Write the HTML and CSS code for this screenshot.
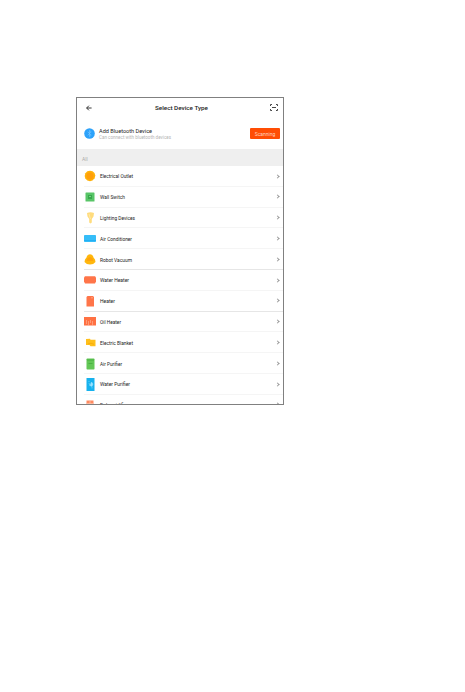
FILE: index.html
```html
<!DOCTYPE html>
<html lang="en">
<head>
<meta charset="utf-8">
<title>Select Device Type</title>
<link rel="stylesheet" href="styles.css">
</head>
<body>
<main class="screen">
  <header class="bar">
    <svg class="back" viewBox="0 0 6 6"><path d="M5.6 3H.7M2.9.7.6 3l2.3 2.3"/></svg>
    <h1 class="title"><svg class="fit" width="53" height="9"><text x="0" y="7" textLength="53" lengthAdjust="spacingAndGlyphs">Select Device Type</text></svg></h1>
    <svg class="scan" viewBox="0 0 8 7"><path d="M.5 2V.5H2M6 .5h1.500V2M.5 5v1.500H2M6 6.500h1.500V5M2 3.500h4"/></svg>
  </header>
  <section class="bluetooth">
    <svg class="bt-icon" viewBox="0 0 11 11"><circle cx="5.500" cy="5.500" r="5.300" fill="#2da2fa"/><path d="M3.700 3.700l3.500 3.500-1.700 1.500V2.300l1.700 1.500-3.500 3.500" fill="none" stroke="#7cc8ff" stroke-width=".6"/></svg>
    <div class="bt-text">
      <svg class="fit" width="56" height="7"><text class="bt-title" x="0" y="6" textLength="53" lengthAdjust="spacingAndGlyphs">Add Bluetooth Device</text></svg>
      <svg class="fit" width="74" height="6"><text class="bt-note" x="0" y="4.500" textLength="72">Can connect with bluetooth devices</text></svg>
    </div>
    <button class="scan-btn">Scanning</button>
  </section>
  <div class="group">All</div>
  <ul class="list">
    <li class="row"><span class="icon"><svg width="12" height="12"><path d="M6 .7l2.500.5 2 1.700.8 2.600-.7 2.700L8.500 10.600 6 11.200l-2.700-.7L1.300 8.500.7 6l.7-2.700 2-2z" fill="#ffb10a"/><circle cx="6" cy="6" r="3.500" fill="#ff9f0b"/></svg></span><svg class="label" width="40" height="9"><text y="6.500" textLength="33" lengthAdjust="spacingAndGlyphs">Electrical Outlet</text></svg><i class="chev"></i></li>
    <li class="row"><span class="icon"><svg width="10" height="10"><rect x=".5" y=".5" width="9" height="9" rx=".6" fill="#58c567"/><rect x="3" y="3" width="4" height="4" fill="#37a94b"/><path d="M4.500 4h1v1h-1z" fill="#c6f0cc"/></svg></span><svg class="label" width="40" height="9"><text y="6.500" textLength="25" lengthAdjust="spacingAndGlyphs">Wall Switch</text></svg><i class="chev"></i></li>
    <li class="row"><span class="icon"><svg width="9" height="12"><path d="M1 1Q4.500-.5 8 1L7.500 4.500 5.800 7v3.500L4.500 11.500 3.200 10.500V7L1.500 4.500z" fill="#ffdc7d"/><path d="M3 2l1.500 5" stroke="#ffe8a8"/></svg></span><svg class="label" width="40" height="9"><text y="6.500" textLength="35" lengthAdjust="spacingAndGlyphs">Lighting Devices</text></svg><i class="chev"></i></li>
    <li class="row"><span class="icon"><svg width="12" height="7"><rect width="12" height="7" rx=".8" fill="#36bdf8"/><path d="M0 5.500h12" stroke="#22b0f4"/></svg></span><svg class="label" width="40" height="9"><text y="6.500" textLength="32" lengthAdjust="spacingAndGlyphs">Air Conditioner</text></svg><i class="chev"></i></li>
    <li class="row strong"><span class="icon"><svg width="12" height="11"><path d="M6 .3Q9 .5 9.500 3.500 11.500 5 11.500 8 9.500 10.500 6 10.500T.5 8q0-3 2-4.500Q3 .5 6 .3z" fill="#ffb70d"/><path d="M3.500 4.500Q6 1.500 8.500 4.500L9.500 7h-7z" fill="#ffa40b"/></svg></span><svg class="label" width="40" height="9"><text y="6.500" textLength="32" lengthAdjust="spacingAndGlyphs">Robot Vacuum</text></svg><i class="chev"></i></li>
    <li class="row"><span class="icon"><svg width="12" height="8"><path d="M1 .3h10l1 1.200v4L11 7.500H1L0 5.500v-4z" fill="#ff7549"/></svg></span><svg class="label" width="40" height="9"><text y="6.500" textLength="29" lengthAdjust="spacingAndGlyphs">Water Heater</text></svg><i class="chev"></i></li>
    <li class="row strong"><span class="icon"><svg width="9" height="12"><path d="M1.500 1h5.500l1 1v9.500H.5V2z" fill="#ff7549"/><path d="M5 2.800h2" stroke="#ffad8c" stroke-width=".8"/></svg></span><svg class="label" width="40" height="9"><text y="6.500" textLength="15" lengthAdjust="spacingAndGlyphs">Heater</text></svg><i class="chev"></i></li>
    <li class="row"><span class="icon"><svg width="12" height="9"><rect width="12" height="8.500" fill="#ff7143"/><path d="M2.500 3v4M4.500 4v4M6.500 3v3M8.500 4v4" stroke="#ffa684" stroke-width=".8"/></svg></span><svg class="label" width="40" height="9"><text y="6.500" textLength="21" lengthAdjust="spacingAndGlyphs">Oil Heater</text></svg><i class="chev"></i></li>
    <li class="row"><span class="icon"><svg width="11" height="9"><path d="M1 1l4-.3.500 1H10.500v6.500H5.500L4.500 7H1z" fill="#ffbf1b"/><path d="M3 5.800l3-.5 3 1" stroke="#f9af0c" fill="none"/></svg></span><svg class="label" width="40" height="9"><text y="6.500" textLength="33" lengthAdjust="spacingAndGlyphs">Electric Blanket</text></svg><i class="chev"></i></li>
    <li class="row"><span class="icon"><svg width="9" height="12"><rect x=".5" y=".5" width="8" height="11" rx=".7" fill="#63c756"/><path d="M1 2h7M2.500 5.500h4" stroke="#43ad3d" stroke-width=".8"/></svg></span><svg class="label" width="40" height="9"><text y="6.500" textLength="22" lengthAdjust="spacingAndGlyphs">Air Purifier</text></svg><i class="chev"></i></li>
    <li class="row"><span class="icon"><svg width="9" height="13"><rect x=".5" width="8" height="13" fill="#16b2ee"/><path d="M5.500 4l1.500 2-1 2.500-2-1zM3 5l1 3M6 9v1.500M3 3v1" fill="#9be3ff" stroke="#9be3ff" stroke-width=".5"/></svg></span><svg class="label" width="40" height="9"><text y="6.500" textLength="30" lengthAdjust="spacingAndGlyphs">Water Purifier</text></svg><i class="chev"></i></li>
    <li class="row"><span class="icon"><svg width="8" height="11"><rect x=".5" y=".5" width="7" height="10" fill="#ff8a60"/><path d="M4 1v3M1 3.500h6" stroke="#ffc3a8" stroke-width=".8"/></svg></span><svg class="label" width="40" height="9"><text y="6.500" textLength="28" lengthAdjust="spacingAndGlyphs">Dehumidifier</text></svg><i class="chev"></i></li>
  </ul>
</main>
</body>
</html>
```
FILE: styles.css
```css
* { box-sizing: border-box; }
body { margin: 0; background: #fff; font-family: Roboto, "Liberation Sans", sans-serif; color: #222; }
.screen { width: 208px; height: 308px; margin: 97px 0 0 76px; border: 1px solid #808080; overflow: hidden; background: #fff; }
.bar { height: 19px; padding: 0 5px 0 9px; display: flex; align-items: center; justify-content: space-between; }
.back { width: 6px; height: 6px; fill: none; stroke: #222; stroke-width: .9; }
.scan { width: 8px; height: 7px; fill: none; stroke: #333; stroke-width: .9; }
.title { margin: 0 0 0 1px; line-height: 0; font-size: 6.2px; font-weight: 500; }
svg { display: block; flex: none; overflow: visible; }
text { fill: currentColor; }
.bluetooth { height: 32px; padding: 0 3px 0 7px; display: flex; align-items: center; }
.bt-icon { width: 11px; height: 11px; }
.bt-text { flex: 1; padding-left: 4px; }
.bt-title { font-size: 6px; }
.bt-note { font-size: 4.5px; fill: #b4b4b4; }
.scan-btn { width: 30px; height: 11px; padding: 0; border: 0; border-radius: 1px; background: #ff4d04; color: #ffd2be; font: 5px/12px Roboto, sans-serif; text-align: center; }
.group { height: 17px; padding-left: 5px; background: #efefef; color: #aaa; font-size: 5px; line-height: 20px; }
.list { margin: 0; padding: 0; list-style: none; }
.row { height: 20.8px; display: flex; align-items: center; position: relative; padding: 0 4px 0 7px; }
.row::after { content: ""; position: absolute; left: 7px; right: 0; bottom: 0; height: 1px; background: #f5f5f5; }
.row.strong::after { background: #e6e6e6; }
.icon { width: 12px; display: flex; justify-content: center; }
.label { margin: -1px 0 0 4px; font-size: 5.5px; }
.chev { width: 3px; height: 3px; margin: -.5px 0 0 auto; border: solid #999; border-width: .8px .8px 0 0; transform: rotate(45deg); }
```
